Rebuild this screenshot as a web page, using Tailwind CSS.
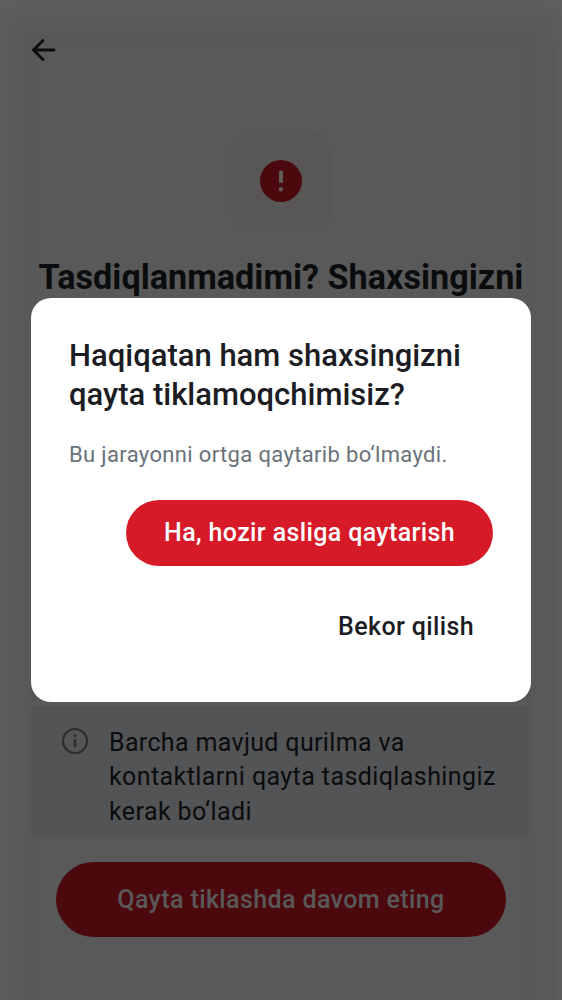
<!DOCTYPE html>
<html lang="uz"><head><meta charset="utf-8"><title>Tiklash</title>
<script src="https://cdn.jsdelivr.net/npm/@tailwindcss/browser@4"></script></head>
<body class="font-['Roboto',sans-serif]">
<div class="relative w-[562px] h-[1000px] overflow-hidden bg-[#595959]">
  <main class="flex flex-col h-[1050px] shadow-[inset_0_8px_30px_0_#616161]">
    <header class="h-[100px] pl-[28px] pt-[34px]">
      <svg class="w-8 h-8" viewBox="0 0 32 32" fill="none" stroke="#0b0c0e" stroke-width="2.8" stroke-linecap="round" stroke-linejoin="round"><path d="M26 16H5.5M15 6.500 5.500 16l9.500 9.500"/></svg>
    </header>
    <div class="mt-[31px] mx-auto w-[100px] h-[100px] rounded-[22px] bg-[#595755] flex items-center justify-center shrink-0">
      <svg class="w-[42px] h-[42px]" viewBox="0 0 42 42"><circle cx="21" cy="21" r="21" fill="#4b090e"/><rect x="19" y="10.500" width="4" height="12.500" rx="1.500" fill="#615a5a"/><circle cx="21" cy="29.200" r="2.200" fill="#615a5a"/></svg>
    </div>
    <h1 class="mt-[25px] h-[42px] leading-[42px] text-center text-[34.200px] font-bold text-[#0b0c0e] whitespace-nowrap shrink-0"><span>Tasdiqlanmadimi? Shaxsingizni</span></h1>
    <section class="mt-[378px] mx-[31px] h-6 shrink-0 bg-[#535456]"></section>
    <section class="mt-[6px] mx-[31px] h-[131px] shrink-0 rounded-b-[8px] bg-[#535456] flex pl-[30px] pt-[20px]">
      <svg class="w-7 h-7 mt-[1px] shrink-0" viewBox="0 0 28 28"><circle cx="14" cy="14" r="12" fill="none" stroke="#2b2c2e" stroke-width="2.200"/><circle cx="14" cy="8.800" r="1.400" fill="#2b2c2e"/><path d="M14 13.500v5.500" stroke="#2b2c2e" stroke-width="2.600" stroke-linecap="round"/></svg>
      <p class="ml-[20px] text-[25px] leading-[34.300px] tracking-[0.410px] text-[#0b0c0e] whitespace-nowrap"><span class="tracking-[0.340px]">Barcha mavjud qurilma va</span><br><span>kontaktlarni qayta tasdiqlashingiz</span><br><span>kerak bo‘ladi</span></p>
    </section>
    <button class="mt-[25px] mx-[56px] h-[75px] shrink-0 rounded-full bg-[#4b090e] text-[#595959] text-[25px] font-medium tracking-[0.390px]"><span>Qayta tiklashda davom eting</span></button>
  </main>
  <div role="dialog" class="absolute left-[31px] top-[298px] w-[500px] h-[403.500px] rounded-[20px] bg-white flex flex-col pl-[38px] pr-[38px] pt-[38px]">
    <h2 class="text-[31px] leading-[39px] font-medium text-[#1c1d24] whitespace-nowrap"><span>Haqiqatan ham shaxsingizni</span><br><span>qayta tiklamoqchimisiz?</span></h2>
    <p class="mt-[25px] text-[22px] leading-[31px] tracking-[0.350px] text-[#69717a] whitespace-nowrap"><span>Bu jarayonni ortga qaytarib bo‘lmaydi.</span></p>
    <button class="self-end mt-[30px] w-[367px] h-[66px] rounded-full bg-[#d61a28] text-white text-[25px] font-medium tracking-[0.370px]"><span>Ha, hozir asliga qaytarish</span></button>
    <button class="self-end mt-[28px] mr-[19px] h-[66px] text-[#1c1d24] text-[25px] font-medium tracking-[0.370px]"><span>Bekor qilish</span></button>
  </div>
</div>
</body></html>
